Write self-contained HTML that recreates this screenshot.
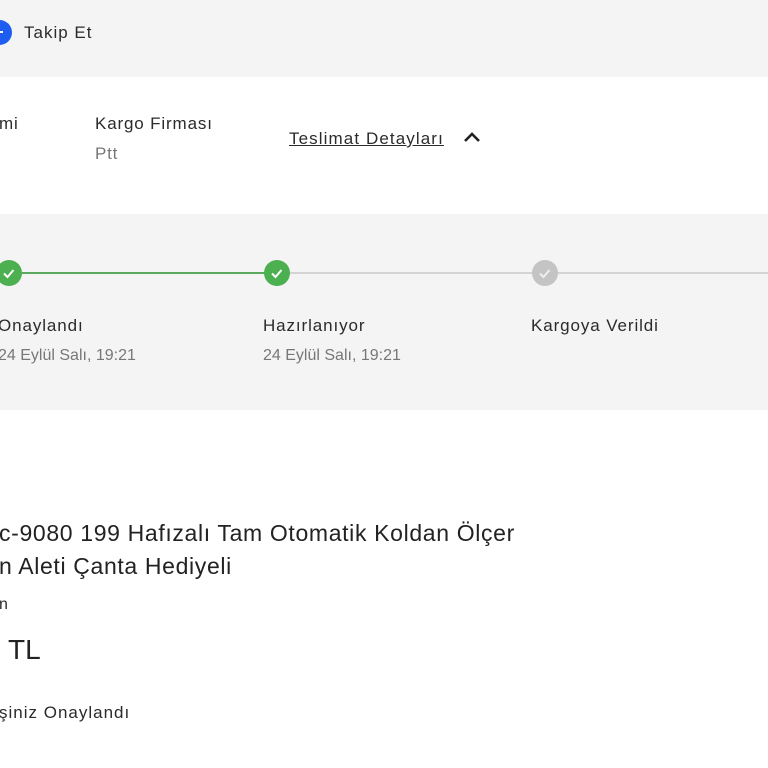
<!DOCTYPE html>
<html><head><meta charset="utf-8"><style>
*{margin:0;padding:0;box-sizing:border-box}
body{width:768px;height:768px;overflow:hidden;background:#fff;font-family:"Liberation Sans",sans-serif;color:#2b2b2b;position:relative}
.a{position:absolute;white-space:nowrap;line-height:1}
.g{color:#777}
</style></head><body>
<div class="a" style="left:0;top:0;width:768px;height:77px;background:#f4f4f4"></div>
<div class="a" style="left:-13px;top:20px;width:25px;height:25px;border-radius:50%;background:#1d5ef0"></div>
<div class="a" style="left:-2px;top:31px;width:5px;height:2px;background:#fff"></div>
<div class="a" style="left:24px;top:24px;font-size:17px;letter-spacing:1px">Takip Et</div>

<div class="a" style="left:-1px;top:115px;font-size:17px;letter-spacing:0.8px">mi</div>
<div class="a" style="left:95px;top:115px;font-size:17px;letter-spacing:0.85px">Kargo Firması</div>
<div class="a g" style="left:95px;top:145px;font-size:17px;letter-spacing:0.8px">Ptt</div>
<div class="a" style="left:289px;top:130px;font-size:17px;letter-spacing:1.1px;text-decoration:underline">Teslimat Detayları</div>
<svg class="a" style="left:462px;top:129px" width="20" height="16" viewBox="0 0 20 16"><path d="M3 12 L10 5 L17 12" stroke="#222" stroke-width="2.6" fill="none"/></svg>

<div class="a" style="left:0;top:214px;width:768px;height:196px;background:#f4f4f4"></div>
<div class="a" style="left:9px;top:272px;width:268px;height:2px;background:#5aa85e"></div>
<div class="a" style="left:277px;top:272px;width:491px;height:2px;background:#d4d4d4"></div>
<svg class="a" style="left:-5px;top:259px" width="28" height="28"><circle cx="14" cy="14" r="13" fill="#4cb050"/><path d="M9 14.5l3.5 3.5 6-7" stroke="#fff" stroke-width="2" fill="none"/></svg>
<svg class="a" style="left:263px;top:259px" width="28" height="28"><circle cx="14" cy="14" r="13" fill="#4cb050"/><path d="M9 14.5l3.5 3.5 6-7" stroke="#fff" stroke-width="2" fill="none"/></svg>
<svg class="a" style="left:531px;top:259px" width="28" height="28"><circle cx="14" cy="14" r="13" fill="#c4c4c4"/><path d="M9 14.5l3.5 3.5 6-7" stroke="#eee" stroke-width="2" fill="none"/></svg>
<div class="a" style="left:-2px;top:317px;font-size:17px;letter-spacing:0.9px">Onaylandı</div>
<div class="a g" style="left:-2px;top:348px;font-size:16px">24 Eylül Salı, 19:21</div>
<div class="a" style="left:263px;top:317px;font-size:17px;letter-spacing:0.9px">Hazırlanıyor</div>
<div class="a g" style="left:263px;top:348px;font-size:16px">24 Eylül Salı, 19:21</div>
<div class="a" style="left:531px;top:317px;font-size:17px;letter-spacing:0.9px">Kargoya Verildi</div>

<div class="a" style="left:-1px;top:522px;font-size:23px;letter-spacing:0.65px;color:#222">c-9080 199 Hafızalı Tam Otomatik Koldan Ölçer</div>
<div class="a" style="left:-1px;top:555px;font-size:23px;letter-spacing:0.65px;color:#222">n Aleti Çanta Hediyeli</div>
<div class="a" style="left:-1px;top:597px;font-size:16px">n</div>
<div class="a" style="left:8px;top:636px;font-size:28px;color:#222">TL</div>
<div class="a" style="left:-1px;top:704px;font-size:17px;letter-spacing:1px">şiniz Onaylandı</div>
</body></html>
